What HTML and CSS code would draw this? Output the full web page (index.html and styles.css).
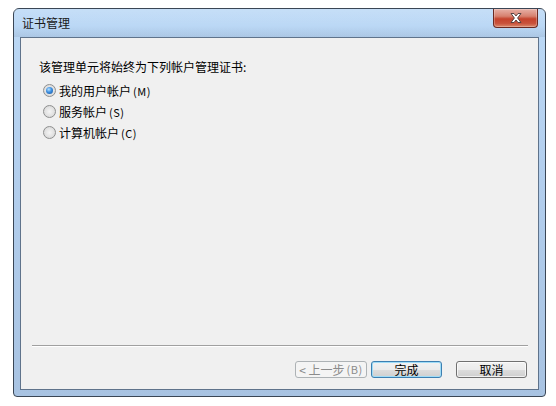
FILE: index.html
```html
<!DOCTYPE html>
<html lang="zh-CN">
<head>
<meta charset="utf-8">
<title>证书管理</title>
<link rel="stylesheet" href="styles.css">
</head>
<body>
<div class="window">
  <div class="titlebar">
    <span class="title">证书管理</span>
    <div class="close">
      <svg width="16" height="12" viewBox="0 0 16 12">
        <path d="M3 1.5 L6 1.5 L8 4 L10 1.5 L13 1.5 L9.6 6 L13 10.5 L10 10.5 L8 8 L6 10.5 L3 10.5 L6.4 6 Z" fill="#fff" stroke="#4a3a3a" stroke-width="0.9" stroke-linejoin="round"/>
      </svg>
    </div>
  </div>
  <div class="panel">
    <div class="intro">该管理单元将始终为下列帐户管理证书:</div>
    <div class="options">
      <label class="option"><span class="radio checked"></span><span>我的用户帐户<span class="key">(M)</span></span></label>
      <label class="option"><span class="radio"></span><span>服务帐户<span class="key">(S)</span></span></label>
      <label class="option"><span class="radio"></span><span>计算机帐户<span class="key">(C)</span></span></label>
    </div>
    <div class="spacer"></div>
    <div class="separator"></div>
    <div class="buttons">
      <div class="btn disabled">&lt; 上一步<span class="key">(B)</span></div>
      <div class="btn default">完成</div>
      <div class="btn cancel">取消</div>
    </div>
  </div>
</div>
</body>
</html>
```
FILE: styles.css
```css
html, body {
  margin: 0;
  padding: 0;
  background: #ffffff;
}
body {
  font-family: "Noto Sans CJK SC", "Noto Sans", sans-serif;
  font-size: 12px;
  color: #000;
  padding: 8px 0 0 13px;
}
.window {
  box-sizing: border-box;
  width: 533px;
  height: 389px;
  border: 1px solid #3a4655;
  border-radius: 6px 6px 4px 4px;
  background: linear-gradient(180deg, #bcd9f6 0%, #b3cfee 40%, #a8c3e2 100%);
  display: flex;
  flex-direction: column;
  padding: 0 6px 6px 6px;
}
.titlebar {
  height: 28px;
  display: flex;
  align-items: center;
  justify-content: space-between;
  background: linear-gradient(180deg, rgba(255,255,255,0.15) 0%, rgba(255,255,255,0) 60%, rgba(80,100,130,0.14) 100%);
  margin: 0 -6px;
  padding: 0 6px 0 8px;
}
.title {
  font-size: 12px;
  color: #1a1a1a;
  margin-top: -1px;
}
.close {
  align-self: flex-start;
  width: 45px;
  height: 19px;
  margin-right: 1px;
  box-sizing: border-box;
  border: 1px solid #6b2a22;
  border-top: none;
  border-radius: 0 0 4px 4px;
  background: linear-gradient(180deg, #e7b0a6 0%, #d7816f 40%, #c5432d 55%, #c9533d 80%, #dc8a6d 100%);
  display: flex;
  align-items: center;
  justify-content: center;
  box-shadow: inset 0 0 0 1px rgba(255,255,255,0.25);
}
.close svg {
  display: block;
}
.panel {
  flex: 1;
  border: 1px solid #5f738b;
  background: #f0f0f0;
  display: flex;
  flex-direction: column;
  padding: 21px 11px 11px 18px;
}
.intro {
  line-height: 16px;
  height: 16px;
}
.options {
  margin-top: 5px;
  display: flex;
  flex-direction: column;
}
.option {
  height: 21px;
  display: flex;
  align-items: center;
  padding-left: 4px;
  line-height: 16px;
}
.radio {
  box-sizing: border-box;
  width: 13px;
  height: 13px;
  border-radius: 50%;
  border: 1px solid #8e8f8f;
  background: radial-gradient(circle at 50% 50%, #f4f4f4 0%, #e2e2e2 55%, #cfcfcf 100%);
  margin-right: 3px;
  position: relative;
  flex: none;
}
.radio.checked::after {
  content: "";
  position: absolute;
  left: 2px;
  top: 2px;
  width: 7px;
  height: 7px;
  border-radius: 50%;
  background: radial-gradient(circle at 40% 35%, #b6e2ff 0%, #3c8ee0 45%, #134f97 100%);
}
.key {
  font-size: 11px;
  margin-left: 2px;
  letter-spacing: 0.5px;
}
.spacer {
  flex: 1;
}
.separator {
  height: 1px;
  background: #a0a0a0;
  border-bottom: 1px solid #ffffff;
  margin: 0 -1px 14px -7px;
}
.buttons {
  display: flex;
  justify-content: flex-end;
}
.btn {
  box-sizing: border-box;
  width: 71px;
  height: 17px;
  border: 1px solid #707070;
  border-radius: 3px;
  background: linear-gradient(180deg, #f2f2f2 0%, #ebebeb 50%, #dddddd 51%, #cfcfcf 100%);
  display: flex;
  align-items: center;
  justify-content: center;
  font-size: 12px;
  line-height: 15px;
  color: #000;
  box-shadow: inset 0 0 0 1px rgba(255,255,255,0.7);
}
.btn.disabled {
  width: 72px;
  border-color: #adb2b5;
  background: #f4f4f4;
  color: #8b8b8b;
  box-shadow: none;
}
.btn.default {
  margin-left: 4px;
  border-color: #3c7fb1;
  box-shadow: inset 0 0 0 1px #9fdcf7;
}
.btn.cancel {
  margin-left: 14px;
}
```
